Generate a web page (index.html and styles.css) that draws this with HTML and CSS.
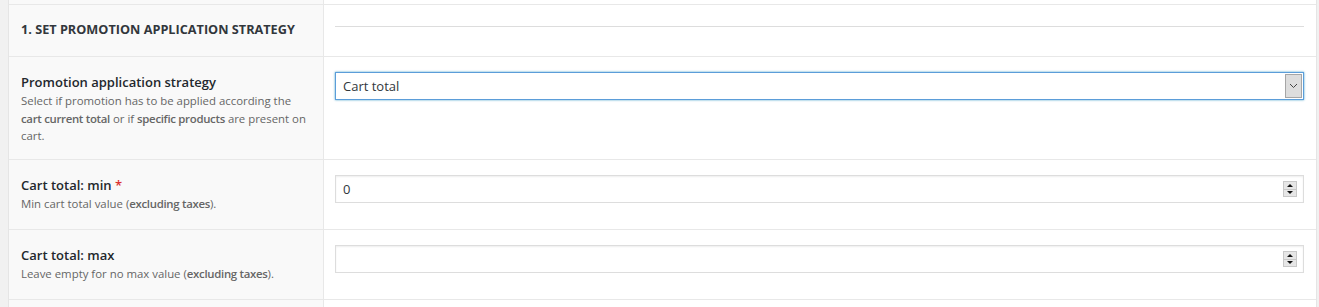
FILE: index.html
```html
<!DOCTYPE html>
<html lang="en">
<head>
<meta charset="utf-8">
<title>Promotion settings</title>
<link rel="stylesheet" href="styles.css">
</head>
<body>
<div class="form">
  <div class="row row-top">
    <div class="th"></div>
    <div class="td"></div>
  </div>
  <div class="row row-head">
    <div class="th"><h3 class="section-title">1. Set promotion application strategy</h3></div>
    <div class="td"><div class="sep"></div></div>
  </div>
  <div class="row row-strategy">
    <div class="th">
      <div class="label">Promotion application strategy</div>
      <div class="desc">Select if promotion has to be applied according the <b>cart current total</b> or if <b>specific products</b> are present on cart.</div>
    </div>
    <div class="td">
      <div class="select">
        <span class="select-value">Cart total</span>
        <span class="select-arrow"><svg width="9" height="6" viewBox="0 0 9 6"><path d="M1 1 L4.5 4.5 L8 1" fill="none" stroke="#444" stroke-width="1"/></svg></span>
      </div>
    </div>
  </div>
  <div class="row row-field">
    <div class="th">
      <div class="label">Cart total: min <span class="req">*</span></div>
      <div class="desc">Min cart total value (<b>excluding taxes</b>).</div>
    </div>
    <div class="td">
      <div class="number">
        <span class="number-value">0</span>
        <span class="spin"><span class="spin-up"></span><span class="spin-down"></span></span>
      </div>
    </div>
  </div>
  <div class="row row-field">
    <div class="th">
      <div class="label">Cart total: max</div>
      <div class="desc">Leave empty for no max value (<b>excluding taxes</b>).</div>
    </div>
    <div class="td">
      <div class="number">
        <span class="number-value"></span>
        <span class="spin"><span class="spin-up"></span><span class="spin-down"></span></span>
      </div>
    </div>
  </div>
  <div class="row row-bottom">
    <div class="th"></div>
    <div class="td"></div>
  </div>
</div>
</body>
</html>
```

FILE: styles.css
```css
* { box-sizing: border-box; }
html, body { margin: 0; padding: 0; }
body {
  background: #f1f1f1;
  font-family: "Open Sans", "Noto Sans", sans-serif;
  color: #23282d;
  height: 307px;
  overflow: hidden;
}
.form {
  margin-left: 8px;
  width: 1309px;
  background: #fff;
  border-left: 1px solid #e5e5e5;
  border-right: 1px solid #e5e5e5;
}
.row {
  display: flex;
  border-bottom: 1px solid #e8e8e8;
}
.th {
  width: 315px;
  flex: none;
  background: #f9f9f9;
  border-right: 1px solid #e8e8e8;
  padding: 15px 12px 0 12px;
}
.td {
  flex: 1;
  padding: 15px 12px 0 11px;
}
.row-top .th, .row-top .td { height: 4px; padding: 0; }
.row-head .th { height: 51px; padding: 0 12px 4px; display: flex; align-items: center; }
.row-head .td { padding-top: 21px; }
.section-title {
  margin: 0;
  font-size: 12.7px;
  font-weight: 700;
  text-transform: uppercase;
  color: #32373c;
}
.sep { height: 1px; background: #dddddd; }
.label {
  font-size: 13px;
  font-weight: 600;
  line-height: 20px;
}
.req { color: #dc3232; }
.desc {
  font-size: 11.4px;
  line-height: 17.5px;
  color: #666;
}
.desc b { font-weight: 600; letter-spacing: -0.3px; }
.row-strategy .th { height: 102px; }
.row-field .th { height: 69px; }
.select {
  display: flex;
  align-items: center;
  height: 28px;
  border: 1px solid #5b9dd9;
  box-shadow: 0 0 2px rgba(30, 140, 190, 0.8);
  background: #fff;
  padding: 1px 1px 1px 7px;
}
.select-value { flex: 1; font-size: 13px; color: #32373c; }
.select-arrow {
  width: 17px;
  height: 100%;
  background: #dddddd;
  border: 1px solid #a6a6a6;
  display: flex;
  align-items: center;
  justify-content: center;
}
.number {
  display: flex;
  align-items: center;
  height: 28px;
  border: 1px solid #dddddd;
  box-shadow: inset 0 1px 2px rgba(0, 0, 0, 0.07);
  background: #fff;
  padding: 0 6px 0 7px;
}
.number-value { flex: 1; font-size: 13px; color: #32373c; }
.spin {
  width: 14px;
  height: 16px;
  display: flex;
  flex-direction: column;
  border: 1px solid #c8c8c8;
  background: #e6e6e6;
}
.spin-up, .spin-down {
  flex: 1;
  display: flex;
  align-items: center;
  justify-content: center;
}
.spin-up { border-bottom: 1px solid #c8c8c8; }
.spin-up::before {
  content: "";
  border-left: 3px solid transparent;
  border-right: 3px solid transparent;
  border-bottom: 3px solid #111;
}
.spin-down::before {
  content: "";
  border-left: 3px solid transparent;
  border-right: 3px solid transparent;
  border-top: 3px solid #111;
}
.row-bottom .th { height: 20px; }
```
